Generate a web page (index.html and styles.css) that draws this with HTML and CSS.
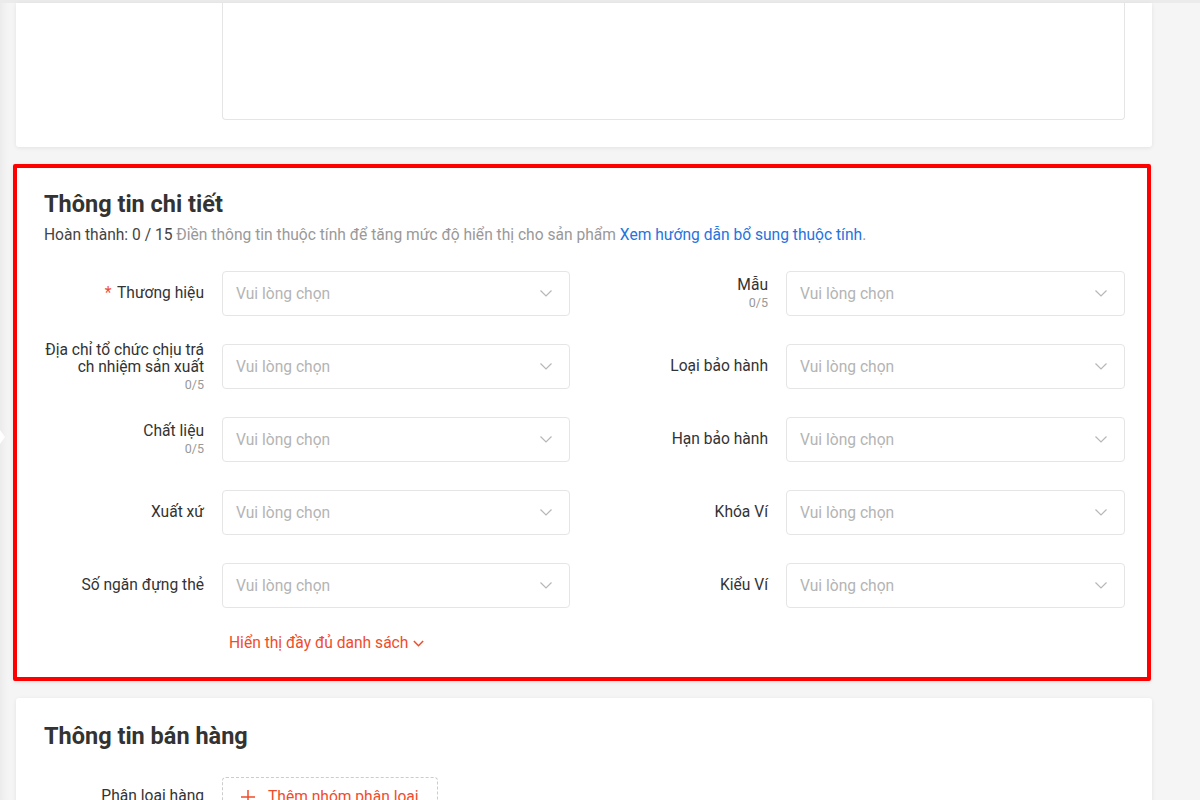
FILE: index.html
```html
<!DOCTYPE html>
<html lang="vi">
<head>
<meta charset="utf-8">
<title>Thông tin chi tiết</title>
<link rel="stylesheet" href="styles.css">
</head>
<body>
<div class="top-edge"></div>
<span class="side-toggle"></span>
<main class="page">
  <section class="card card-top">
    <div class="textarea-box"></div>
  </section>

  <section class="card card-highlight">
    <h2 class="card-title">Thông tin chi tiết</h2>
    <p class="subtitle"><span class="progress">Hoàn thành: 0 / 15</span> Điền thông tin thuộc tính để tăng mức độ hiển thị cho sản phẩm <a class="guide-link" href="#">Xem hướng dẫn bổ sung thuộc tính</a>.</p>

    <div class="attr-grid">
      <div class="attr-item">
        <div class="attr-label"><span class="label-text"><span class="req">*</span> Thương hiệu</span></div>
        <div class="select"><span class="placeholder">Vui lòng chọn</span><svg class="chev" viewBox="0 0 12 7"><path d="M0.5 0.5 L6 6 L11.5 0.5"/></svg></div>
      </div>
      <div class="attr-item">
        <div class="attr-label"><span class="label-text">Mẫu</span><span class="counter">0/5</span></div>
        <div class="select"><span class="placeholder">Vui lòng chọn</span><svg class="chev" viewBox="0 0 12 7"><path d="M0.5 0.5 L6 6 L11.5 0.5"/></svg></div>
      </div>

      <div class="attr-item">
        <div class="attr-label"><span class="label-text">Địa chỉ tổ chức chịu trá<br>ch nhiệm sản xuất</span><span class="counter">0/5</span></div>
        <div class="select"><span class="placeholder">Vui lòng chọn</span><svg class="chev" viewBox="0 0 12 7"><path d="M0.5 0.5 L6 6 L11.5 0.5"/></svg></div>
      </div>
      <div class="attr-item">
        <div class="attr-label"><span class="label-text">Loại bảo hành</span></div>
        <div class="select"><span class="placeholder">Vui lòng chọn</span><svg class="chev" viewBox="0 0 12 7"><path d="M0.5 0.5 L6 6 L11.5 0.5"/></svg></div>
      </div>

      <div class="attr-item">
        <div class="attr-label"><span class="label-text">Chất liệu</span><span class="counter">0/5</span></div>
        <div class="select"><span class="placeholder">Vui lòng chọn</span><svg class="chev" viewBox="0 0 12 7"><path d="M0.5 0.5 L6 6 L11.5 0.5"/></svg></div>
      </div>
      <div class="attr-item">
        <div class="attr-label"><span class="label-text">Hạn bảo hành</span></div>
        <div class="select"><span class="placeholder">Vui lòng chọn</span><svg class="chev" viewBox="0 0 12 7"><path d="M0.5 0.5 L6 6 L11.5 0.5"/></svg></div>
      </div>

      <div class="attr-item">
        <div class="attr-label"><span class="label-text">Xuất xứ</span></div>
        <div class="select"><span class="placeholder">Vui lòng chọn</span><svg class="chev" viewBox="0 0 12 7"><path d="M0.5 0.5 L6 6 L11.5 0.5"/></svg></div>
      </div>
      <div class="attr-item">
        <div class="attr-label"><span class="label-text">Khóa Ví</span></div>
        <div class="select"><span class="placeholder">Vui lòng chọn</span><svg class="chev" viewBox="0 0 12 7"><path d="M0.5 0.5 L6 6 L11.5 0.5"/></svg></div>
      </div>

      <div class="attr-item">
        <div class="attr-label"><span class="label-text">Số ngăn đựng thẻ</span></div>
        <div class="select"><span class="placeholder">Vui lòng chọn</span><svg class="chev" viewBox="0 0 12 7"><path d="M0.5 0.5 L6 6 L11.5 0.5"/></svg></div>
      </div>
      <div class="attr-item">
        <div class="attr-label"><span class="label-text">Kiểu Ví</span></div>
        <div class="select"><span class="placeholder">Vui lòng chọn</span><svg class="chev" viewBox="0 0 12 7"><path d="M0.5 0.5 L6 6 L11.5 0.5"/></svg></div>
      </div>
    </div>

    <div class="more-row">
      <button class="more-btn" type="button">Hiển thị đầy đủ danh sách <svg class="more-chev" viewBox="0 0 10 6"><path d="M0.8 0.8 L5 5 L9.2 0.8"/></svg></button>
    </div>
  </section>

  <section class="card card-sales">
    <h2 class="card-title">Thông tin bán hàng</h2>
    <div class="sales-row">
      <div class="attr-label"><span class="label-text">Phân loại hàng</span></div>
      <button class="add-group" type="button"><svg class="plus" viewBox="0 0 16 16"><path d="M8 1 V15 M1 8 H15"/></svg>Thêm nhóm phân loại</button>
    </div>
  </section>
</main>
</body>
</html>
```

FILE: styles.css
```css
* {
  box-sizing: border-box;
}

html, body {
  margin: 0;
  padding: 0;
}

body {
  background: #f5f5f5;
  font-family: Roboto, "Liberation Sans", Arial, sans-serif;
  font-size: 15.6px;
  color: #333;
  overflow: hidden;
  height: 800px;
  position: relative;
  box-shadow: inset 10px 0 10px -8px rgba(0, 0, 0, 0.06);
}

.top-edge {
  height: 3px;
  background: #ebebeb;
}

.side-toggle {
  position: absolute;
  left: 0;
  top: 430px;
  width: 0;
  height: 0;
  border-top: 7px solid transparent;
  border-bottom: 7px solid transparent;
  border-left: 5px solid #ffffff;
}

.page {
  display: flex;
  flex-direction: column;
  align-items: flex-start;
}

.card {
  background: #fff;
  border-radius: 3px;
  box-shadow: 0 1px 4px rgba(0, 0, 0, 0.08);
}

.card-top {
  margin-left: 16px;
  width: 1136px;
  height: 144px;
  padding: 0 27px 27px 206px;
  border-radius: 0 0 3px 3px;
}

.textarea-box {
  height: 117px;
  border: 1px solid #e5e5e5;
  border-top: none;
  border-radius: 0 0 4px 4px;
}

.card-highlight {
  margin-top: 17px;
  margin-left: 13px;
  width: 1138px;
  border: 4px solid #ff0000;
  border-radius: 2px;
  padding: 21px 21px 24px 27px;
}

.card-title {
  margin: 0;
  font-size: 23.5px;
  line-height: 30px;
  font-weight: 700;
  color: #333;
}

.subtitle {
  margin: 6px 0 0;
  line-height: 20px;
  font-size: 15.6px;
  color: #999;
  white-space: nowrap;
}

.progress {
  color: #444;
}

.guide-link {
  color: #2673dd;
  text-decoration: none;
}

.attr-grid {
  margin-top: 26px;
  display: grid;
  grid-template-columns: 526px 517px;
  column-gap: 38px;
  row-gap: 28px;
}

.attr-item {
  display: flex;
  align-items: center;
  gap: 18px;
  height: 45px;
}

.attr-label {
  width: 160px;
  flex: none;
  display: flex;
  flex-direction: column;
  align-items: flex-end;
  text-align: right;
}

.label-text {
  font-size: 15.6px;
  line-height: 17.5px;
  color: #333;
}

.req {
  color: #ee4d2d;
  margin-right: 2px;
}

.counter {
  font-size: 12.5px;
  line-height: 15px;
  color: #999;
}

.select {
  flex: 1;
  height: 45px;
  border: 1px solid #e5e5e5;
  border-radius: 4px;
  display: flex;
  align-items: center;
  justify-content: space-between;
  padding: 0 17px 0 13px;
  background: #fff;
}

.placeholder {
  color: #b4b4b4;
  font-size: 15.6px;
}

.chev {
  width: 12px;
  height: 7px;
  fill: none;
  stroke: #b7b7b7;
  stroke-width: 1.2;
}

.more-row {
  margin-top: 25px;
  padding-left: 178px;
  line-height: 20px;
}

.more-btn {
  border: none;
  background: none;
  padding: 0 7px;
  font: inherit;
  font-size: 15.6px;
  line-height: 20px;
  color: #ee4d2d;
  display: inline-flex;
  align-items: center;
  gap: 5px;
  cursor: pointer;
}

.more-chev {
  width: 11px;
  height: 7px;
  fill: none;
  stroke: #ee4d2d;
  stroke-width: 1.4;
}

.card-sales {
  margin-top: 17px;
  margin-left: 16px;
  width: 1136px;
  height: 200px;
  padding: 23px 27px 0 28px;
}

.sales-row {
  margin-top: 26px;
  display: flex;
  align-items: center;
  gap: 18px;
}

.add-group {
  width: 216px;
  height: 40px;
  border: 1px dashed #cccccc;
  border-radius: 4px;
  background: #fff;
  display: flex;
  align-items: center;
  gap: 12px;
  padding: 0 17px;
  font: inherit;
  font-size: 15.6px;
  color: #ee4d2d;
  white-space: nowrap;
}

.plus {
  width: 16px;
  height: 16px;
  flex: none;
  fill: none;
  stroke: #ee4d2d;
  stroke-width: 1.5;
}
```
